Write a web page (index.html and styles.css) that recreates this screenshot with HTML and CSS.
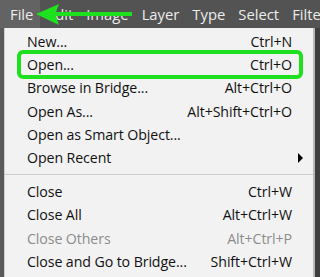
FILE: index.html
```html
<!DOCTYPE html>
<html>
<head>
<meta charset="utf-8">
<link rel="stylesheet" href="styles.css">
</head>
<body>
<div class="app">
  <div class="menubar">
    <span class="mb-item active">File</span>
    <span class="mb-item">Edit</span>
    <span class="mb-item">Image</span>
    <span class="mb-item">Layer</span>
    <span class="mb-item">Type</span>
    <span class="mb-item">Select</span>
    <span class="mb-item">Filter</span>
  </div>
  <div class="workspace">
    <div class="left-strip"></div>
    <div class="menu">
      <div class="row"><span>New...</span><span class="key">Ctrl+N</span></div>
      <div class="row"><span>Open...</span><span class="key">Ctrl+O</span></div>
      <div class="row"><span>Browse in Bridge...</span><span class="key">Alt+Ctrl+O</span></div>
      <div class="row"><span>Open As...</span><span class="key">Alt+Shift+Ctrl+O</span></div>
      <div class="row"><span>Open as Smart Object...</span><span class="key"></span></div>
      <div class="row"><span>Open Recent</span><span class="sub"></span></div>
      <div class="sep"></div>
      <div class="row"><span>Close</span><span class="key">Ctrl+W</span></div>
      <div class="row"><span>Close All</span><span class="key">Alt+Ctrl+W</span></div>
      <div class="row disabled"><span>Close Others</span><span class="key">Alt+Ctrl+P</span></div>
      <div class="row"><span>Close and Go to Bridge...</span><span class="key">Shift+Ctrl+W</span></div>
    </div>
    <div class="right-area"></div>
  </div>
  <div class="highlight"></div>
  <svg class="arrow" width="100" height="24" viewBox="0 0 100 24">
    <polygon points="0,10 23,0 20,8 96,8 96,12 20,12 23,21" fill="#1fe01f"/>
  </svg>
</div>
</body>
</html>
```
FILE: styles.css
```css
html, body {
  margin: 0;
  padding: 0;
  background: #444444;
}
.app {
  position: relative;
  width: 320px;
  height: 277px;
  overflow: hidden;
  font-family: "Open Sans", "Noto Sans", sans-serif;
}
.menubar {
  display: flex;
  height: 28px;
  background: #535353;
  align-items: stretch;
}
.mb-item {
  display: flex;
  align-items: center;
  padding: 0 6.5px;
  color: #ececec;
  font-size: 14.8px;
  white-space: nowrap;
}
.mb-item.active {
  background: #636363;
  padding-left: 10px;
  padding-right: 7px;
}
.workspace {
  display: flex;
  height: 249px;
}
.left-strip {
  width: 4px;
  background: #5a5a5a;
}
.menu {
  width: 311px;
  background: #f2f2f2;
  border-left: 1px solid #cfcfcf;
  border-right: 2px solid #b8b8b8;
  padding-top: 2px;
  box-sizing: border-box;
}
.row {
  display: flex;
  justify-content: space-between;
  align-items: center;
  height: 23.2px;
  padding: 0 21px 0 22px;
  font-size: 14.2px;
  color: #111;
  letter-spacing: -0.1px;
  white-space: nowrap;
}
.row.disabled {
  color: #8c8c8c;
}
.sub {
  width: 0;
  height: 0;
  border-top: 5px solid transparent;
  border-bottom: 5px solid transparent;
  border-left: 5px solid #000;
  margin-right: -11px;
}
.sep {
  height: 1px;
  background: #cccccc;
  margin: 5px 0 5px 0;
}
.right-area {
  flex: 1;
  background: #3e3e3e;
}
.highlight {
  position: absolute;
  left: 17px;
  top: 50px;
  width: 286px;
  height: 29px;
  box-sizing: border-box;
  border: 4px solid #1fe01f;
  border-radius: 6px;
}
.arrow {
  position: absolute;
  left: 36px;
  top: 4px;
}
```
